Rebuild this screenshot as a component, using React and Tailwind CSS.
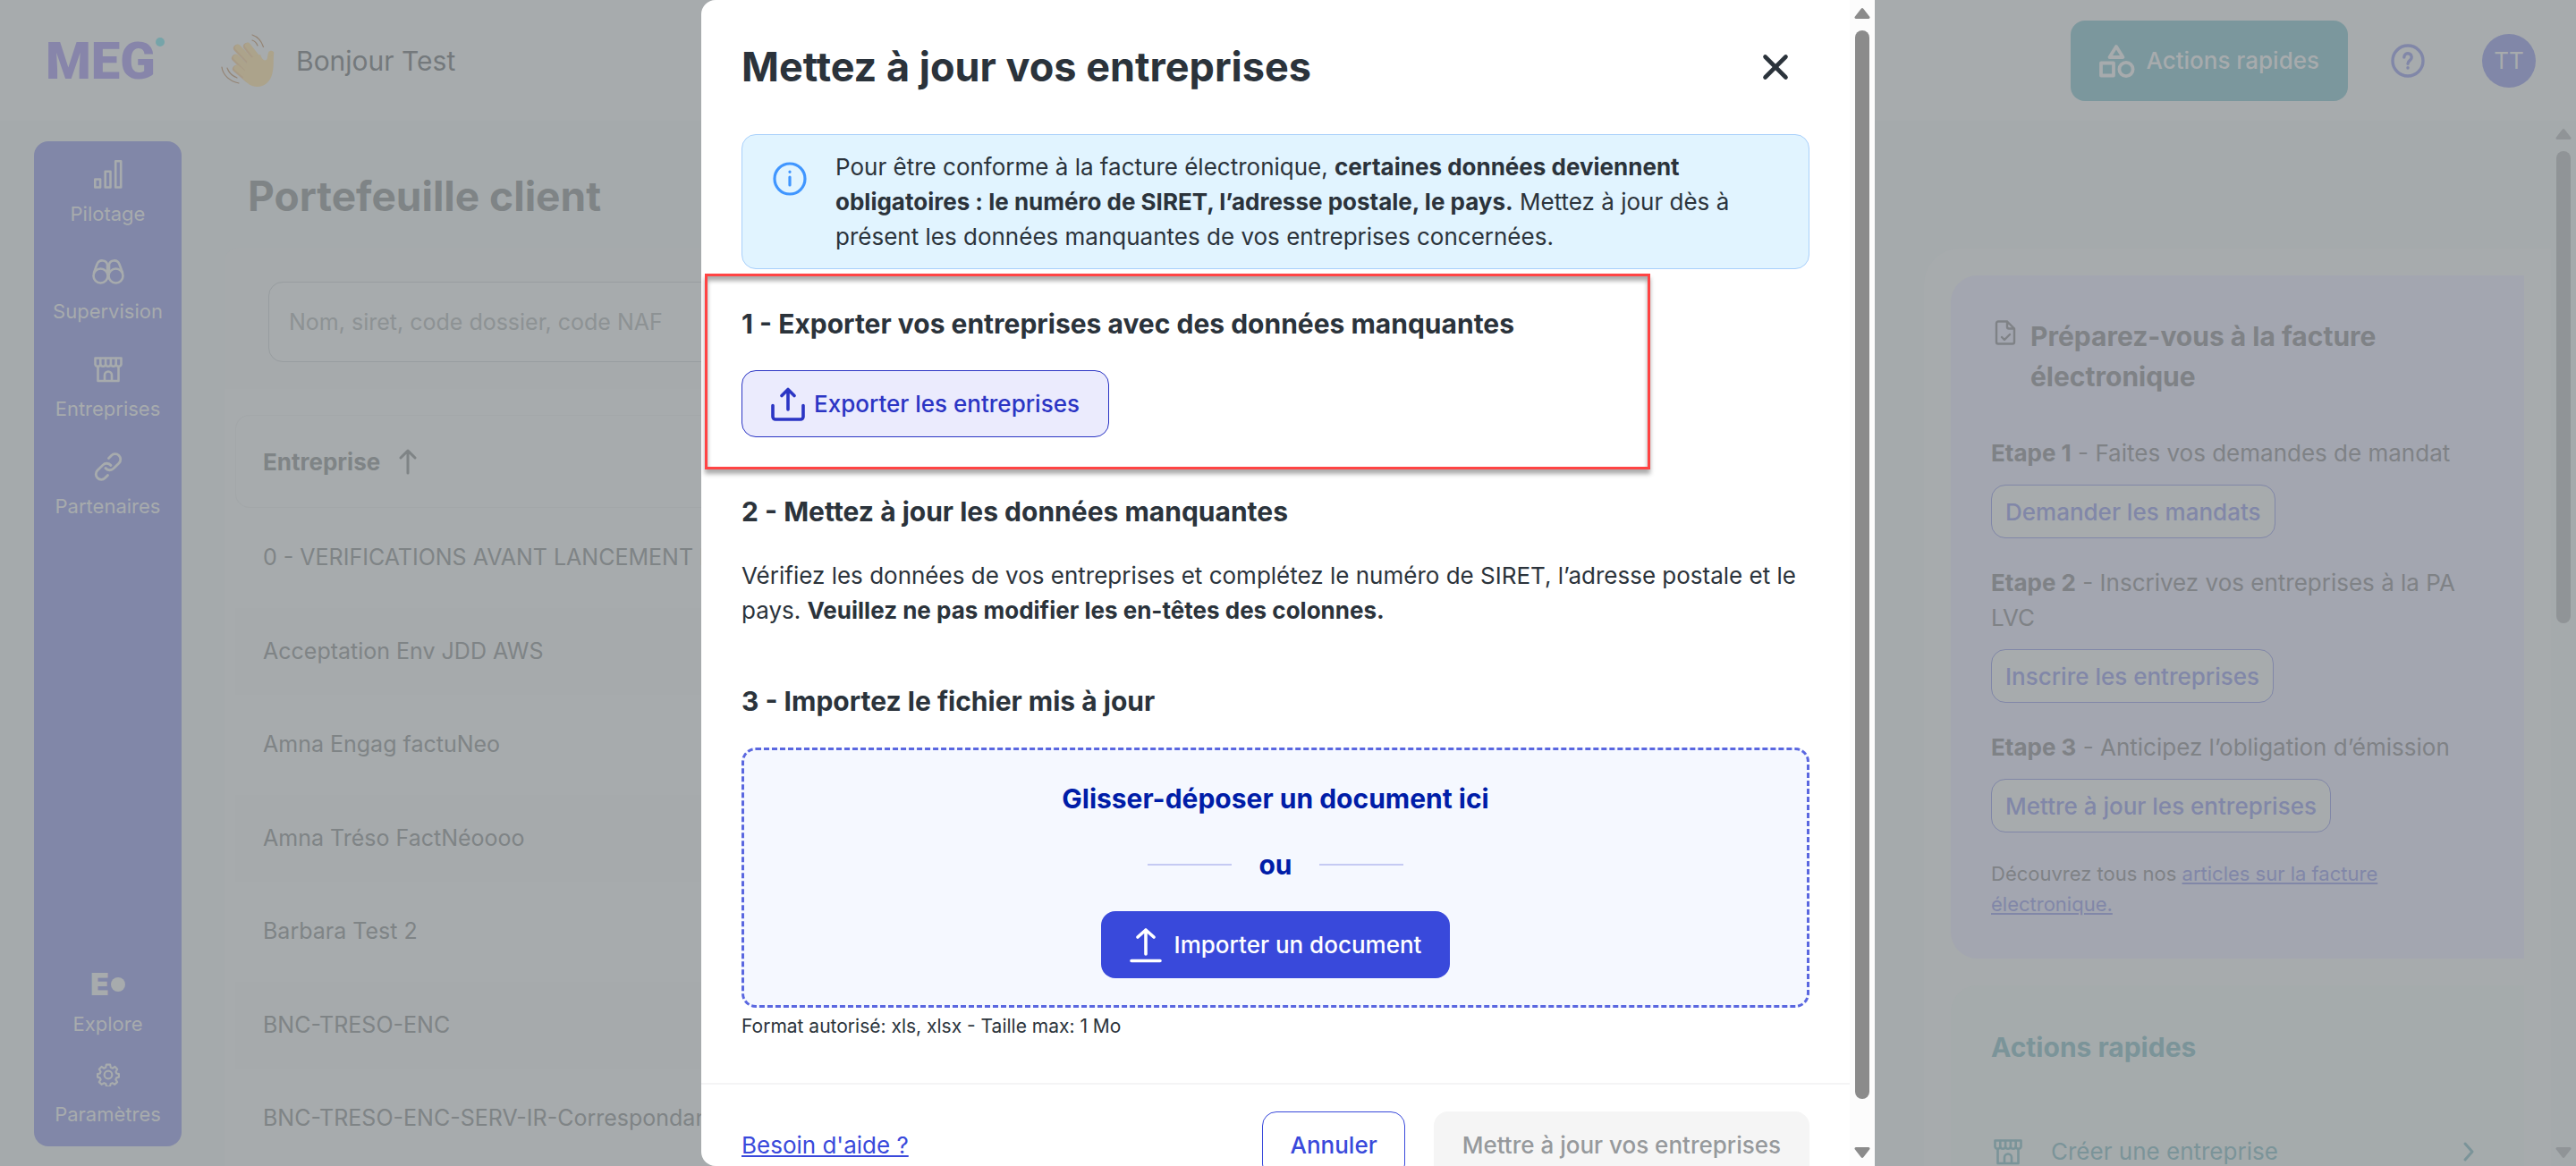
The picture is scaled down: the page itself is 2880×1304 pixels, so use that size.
import { useState } from "react";
import { X } from "lucide-react";

const NAV_TOP = [
  { label: "Pilotage", icon: BarsIcon },
  { label: "Supervision", icon: BinocularsIcon },
  { label: "Entreprises", icon: ShopIcon },
  { label: "Partenaires", icon: ChainIcon },
];

const COMPANIES = [
  "0 - VERIFICATIONS AVANT LANCEMENT DES TESTS",
  "Acceptation Env JDD AWS",
  "Amna Engag factuNeo",
  "Amna Tréso FactNéoooo",
  "Barbara Test 2",
  "BNC-TRESO-ENC",
  "BNC-TRESO-ENC-SERV-IR-Correspondance",
];

const STEPS = [
  { n: 1, text: "Faites vos demandes de mandat", action: "Demander les mandats" },
  { n: 2, text: "Inscrivez vos entreprises à la PA LVC", action: "Inscrire les entreprises" },
  { n: 3, text: "Anticipez l’obligation d’émission", action: "Mettre à jour les entreprises" },
];

function Svg({ children, className, width = 2, viewBox = "0 0 24 24" }) {
  return (
    <svg
      viewBox={viewBox}
      className={className}
      fill="none"
      stroke="currentColor"
      strokeWidth={width}
      strokeLinecap="round"
      strokeLinejoin="round"
      aria-hidden="true"
    >
      {children}
    </svg>
  );
}

function BarsIcon({ className }) {
  return (
    <Svg className={className} viewBox="0 0 32 32" width={2.6}>
      <rect x="1.3" y="21.5" width="5.8" height="9" />
      <rect x="12.7" y="12.8" width="5.8" height="17.7" />
      <rect x="24.2" y="1.3" width="6" height="29.2" />
    </Svg>
  );
}

function BinocularsIcon({ className }) {
  return (
    <Svg className={className} viewBox="0 0 36 32" width={2.6}>
      <circle cx="9.5" cy="20.5" r="8" />
      <circle cx="26.5" cy="20.5" r="8" />
      <path d="M2 17 5.5 7.5C8 1.5 16 2.5 17 8v8M34 17 30.5 7.5C28 1.5 20 2.5 19 8v8M17 9.5h2" />
    </Svg>
  );
}

function ShopIcon({ className }) {
  return (
    <Svg className={className} viewBox="0 0 32 32" width={2.6}>
      <path d="M1.5 3.5h29v7a3 3 0 0 1-5.8 0 3 3 0 0 1-5.8 0 3 3 0 0 1-5.8 0 3 3 0 0 1-5.8 0 3 3 0 0 1-5.8 0z" />
      <path d="M7.3 4v6M13.1 4v6M18.9 4v6M24.7 4v6M4.5 13v16h23V13M12 29v-6.5a4 4 0 0 1 8 0V29" />
    </Svg>
  );
}

function ChainIcon({ className }) {
  return (
    <Svg className={className} viewBox="0 0 32 32" width={2.8}>
      <path d="M13 17.5a6 6 0 0 0 9 .4l6-6a6 6 0 0 0-8.5-8.5l-3 3" />
      <path d="M19 14.5a6 6 0 0 0-9-.4l-6 6a6 6 0 0 0 8.500 8.500l3-3" />
    </Svg>
  );
}

function GearIcon({ className }) {
  return (
    <Svg className={className} width={2}>
      <circle cx="12" cy="12" r="4" />
      <path d="M10 1.5h4l.6 3 1.800.8 2.600-1.700 2.400 2.600-1.500 2.600.7 1.800 2.400.6v3.200l-2.500.7-.8 1.800 1.600 2.600-2.500 2.500-2.500-1.500-1.800.7-.7 2.800H10.200l-.7-2.800-1.800-.7-2.600 1.500-2.500-2.500 1.600-2.600-.8-1.800-2.400-.7v-3.200l2.400-.6.8-1.800-1.600-2.600 2.500-2.600 2.500 1.700 1.800-.8z" />
    </Svg>
  );
}

function ShapesIcon({ className }) {
  return (
    <Svg className={className} viewBox="0 0 40 38" width={3.8}>
      <path d="M19 3 26.5 15h-15z" />
      <rect x="2" y="21.5" width="14" height="14" />
      <circle cx="30" cy="28.5" r="7.6" />
    </Svg>
  );
}

function HelpIcon({ className }) {
  return (
    <Svg className={className} viewBox="0 0 38 38" width={3.4}>
      <circle cx="19" cy="19" r="17" />
      <path d="M14.8 15a4.200 4.200 0 1 1 6.800 3.200c-1.600 1.300-2.600 2-2.600 4M19 26.800v.2" />
    </Svg>
  );
}

function WaveHand({ className }) {
  return (
    <svg viewBox="0 0 62 60" className={className} fill="none" strokeLinecap="round" aria-hidden="true">
      <g stroke="#a89a86" strokeWidth="8">
        <path d="M18 16 36 35M29 14 44 33M16 27 32 43M17 39 30 50" />
      </g>
      <g stroke="#aca38b" strokeWidth="6.500">
        <path d="M19 15 37 34M30 13 45 32M17 26 33 42M18 38 31 49M56 22 53 38" />
      </g>
      <path d="M30 28 44 23C46 29 49 31 52 28l6.500-5c.5 7 .5 14-1 21-2 9-9 15-17 15-7 0-11-4-16-9z" fill="#aca38b" />
      <g stroke="#948474" strokeWidth="1.2">
        <path d="M35 1c6 2 10 6 12.500 13.500M35 7c3 1 5 3.500 6 6M1 37c1 9 9 16 19 18M7 38c2 6 6 9 11 11" />
      </g>
    </svg>
  );
}

function InfoIcon({ className }) {
  return (
    <Svg className={className} viewBox="0 0 38 38" width={3.2}>
      <circle cx="19" cy="19" r="17" />
      <path d="M19 17v9M19 11v.3" />
    </Svg>
  );
}

function ExportIcon({ className }) {
  return (
    <Svg className={className} viewBox="0 0 38 38" width={3.6}>
      <path d="M19 25V2.5M12 9.500l7-7 7 7M2 20.500V33a3 3 0 0 0 3 3h28a3 3 0 0 0 3-3V20.500" />
    </Svg>
  );
}

function UploadIcon({ className }) {
  return (
    <Svg className={className} viewBox="0 0 36 40" width={3.6}>
      <path d="M18 30V3M9 11l9-8 9 8M2 37.500h32" />
    </Svg>
  );
}

function Arrow({ down }) {
  return (
    <svg viewBox="0 0 18 14" className="h-3.5 w-[18px]" fill="currentColor" aria-hidden="true">
      {down ? (
        <path d="M2 1h14a1.500 1.500 0 0 1 1.300 2.300l-7 9a1.700 1.700 0 0 1-2.600 0l-7-9A1.500 1.500 0 0 1 2 1z" />
      ) : (
        <path d="M2 13h14a1.500 1.500 0 0 0 1.300-2.300l-7-9a1.700 1.700 0 0 0-2.600 0l-7 9A1.500 1.500 0 0 0 2 13z" />
      )}
    </svg>
  );
}

function NavItem({ label, children }) {
  return (
    <a href="#" className="flex flex-col items-center">
      <span className="flex h-8 items-center">{children}</span>
      <span className="mt-3 text-[22px] leading-8">{label}</span>
    </a>
  );
}

function Header() {
  return (
    <header className="flex h-[135px] shrink-0 items-center bg-[#a7abad] pr-[45px] pl-[51px]">
      <a href="#" aria-label="MEG" className="flex w-[196px] items-start text-[#8785aa]">
        <span className="font-[Roboto] text-[58px] leading-[60px] font-black">MEG</span>
        <span className="mt-1 h-2.5 w-2.5 rounded-full bg-[#76a4a9]" />
      </a>
      <WaveHand className="h-[60px] w-[62px]" />
      <p className="ml-[22px] text-[30px] leading-10 text-[#74797c]">Bonjour Test</p>
      <button className="ml-auto flex h-[90px] items-center gap-3 rounded-2xl bg-[#7b979d] px-8 text-[26px] font-medium text-[#a7abad]">
        <ShapesIcon className="h-[38px] w-10" />
        Actions rapides
      </button>
      <button aria-label="Aide" className="ml-12 text-[#8187a8]">
        <HelpIcon className="h-[38px] w-[38px]" />
      </button>
      <button className="ml-16 h-[60px] w-[60px] rounded-full bg-[#8187a8] text-[26px] text-[#a7abad]">
        TT
      </button>
    </header>
  );
}

function Sidebar() {
  return (
    <nav className="mt-[23px] mb-[22px] ml-[38px] flex w-[165px] shrink-0 flex-col rounded-2xl bg-[#8187a8] pt-[21px] pb-5 text-[#a7abad]">
      <div className="flex flex-col gap-[33px]">
        {NAV_TOP.map(({ label, icon: Icon }) => (
          <NavItem key={label} label={label}>
            <Icon className="h-8 w-9" />
          </NavItem>
        ))}
      </div>
      <div className="mt-auto flex flex-col gap-[25px]">
        <NavItem label="Explore">
          <span className="flex items-center gap-0.5">
            <span className="text-[34px] leading-8 font-black">E</span>
            <span className="h-4 w-4 rounded-full bg-[#a7abad]" />
          </span>
        </NavItem>
        <NavItem label="Paramètres">
          <GearIcon className="h-[26px] w-[26px]" />
        </NavItem>
      </div>
    </nav>
  );
}

function Portfolio() {
  const [query, setQuery] = useState("");

  return (
    <main className="ml-12 flex min-w-0 flex-1 flex-col pt-[54px]">
      <h1 className="pl-[26px] text-[46px] leading-[60px] font-bold text-[#7f8486]">Portefeuille client</h1>
      <div className="mt-7 rounded-t-2xl bg-[#a6aaac] pt-[38px] pr-12 pb-[30px] pl-[49px]">
        <input
          type="search"
          aria-label="Rechercher une entreprise"
          value={query}
          onChange={(e) => setQuery(e.target.value)}
          placeholder="Nom, siret, code dossier, code NAF"
          className="h-[90px] w-full rounded-2xl border border-[#989da0] bg-[#a7abad] px-[22px] text-[25px] placeholder:text-[#8d9294]"
        />
      </div>
      <div className="flex-1 bg-[#a7abad] pt-[29px] pl-3">
        <table className="w-full table-fixed text-[25px] text-[#7f8486]">
          <thead>
            <tr className="h-[104px]">
              <th className="rounded-2xl pl-[31px] text-left text-[26px] font-bold shadow-[inset_0_0_0_1px_#a3a7a9]">
                <span className="flex items-center gap-5">
                  Entreprise
                  <Svg className="h-[30px] w-[22px]" viewBox="0 0 22 30" width={3}>
                    <path d="M11 28V3M3 11l8-8 8 8" />
                  </Svg>
                </span>
              </th>
            </tr>
          </thead>
          <tbody>
            {COMPANIES.map((name) => (
              <tr key={name} className="h-28 even:h-[97px] even:bg-[#a6aaac]">
                <td className="overflow-hidden pl-[31px] whitespace-nowrap">{name}</td>
              </tr>
            ))}
          </tbody>
        </table>
      </div>
    </main>
  );
}

function SidePanel() {
  return (
    <aside className="mt-[143px] ml-[55px] w-[701px] shrink-0 overflow-hidden rounded-tl-[40px] bg-[#a7abad] pt-[30px] pr-[30px] pl-[30px]">
      <section className="rounded-l-[30px] bg-[#a3a6b0] pt-[46px] pr-10 pb-11 pl-[45px] text-[#7f8286]">
        <h2 className="flex gap-4 text-[30px] leading-[45px] font-bold">
          <Svg className="mt-1 ml-1 h-[28px] w-6 shrink-0" viewBox="0 0 24 28" width={2.4}>
            <path d="M14 1.500H4a2 2 0 0 0-2 2v21a2 2 0 0 0 2 2h16a2 2 0 0 0 2-2V9.500zM14 1.500v6a2 2 0 0 0 2 2h6M8 19l3 3 6-6" />
          </Svg>
          <span className="pr-24">Préparez-vous à la facture électronique</span>
        </h2>
        <ol className="mt-[43px] flex flex-col gap-[30px]">
          {STEPS.map((s) => (
            <li key={s.n}>
              <p className="text-[26px] leading-[39px]">
                <strong>Etape {s.n}</strong> - {s.text}
              </p>
              <button className="mt-4 h-[60px] rounded-2xl border border-[#8187a8] bg-[#a7abad] px-[15px] text-[26px] font-medium text-[#8187a8]">
                {s.action}
              </button>
            </li>
          ))}
        </ol>
        <p className="mt-[29px] text-[22px] leading-[34px]">
          Découvrez tous nos{" "}
          <a href="#" className="text-[#8187a8] underline">
            articles sur la facture électronique.
          </a>
        </p>
      </section>
      <section className="mt-[30px] rounded-tl-[30px] bg-[#a5abac] pt-[49px] pr-[55px] pb-10 pl-[45px] text-[#7b9499]">
        <h2 className="text-[30px] leading-10 font-bold">Actions rapides</h2>
        <a href="#" className="mt-[77px] flex items-center text-[26px] leading-[39px]">
          <ShopIcon className="ml-[3px] h-8 w-8" />
          <span className="ml-8">Créer une entreprise</span>
          <Svg className="ml-auto h-6 w-[14px]" viewBox="0 0 14 24" width={3}>
            <path d="M3 3l8 9-8 9" />
          </Svg>
        </a>
      </section>
    </aside>
  );
}

function UpdateDialog() {
  return (
    <div
      role="dialog"
      aria-modal="true"
      aria-labelledby="dialog-title"
      className="flex w-[1312px] overflow-hidden rounded-l-2xl bg-white text-[#2b333b]"
    >
      <div className="min-w-0 flex-1 overflow-hidden">
        <div className="px-[45px]">
          <div className="flex h-[150px] items-center justify-between">
            <h1 id="dialog-title" className="text-[45px] leading-[60px] font-bold">
              Mettez à jour vos entreprises
            </h1>
            <button aria-label="Fermer" className="mr-[15px]">
              <X className="h-[46px] w-[46px]" strokeWidth={2.4} />
            </button>
          </div>

          <div className="flex gap-8 rounded-2xl border border-[#a9d0fb] bg-[#e1f4ff] px-[34px] py-4">
            <InfoIcon className="mt-3.5 h-[38px] w-[38px] shrink-0 text-[#4096ff]" />
            <p className="text-[26px] leading-[39px]">
              Pour être conforme à la facture électronique, <strong>certaines données deviennent</strong>
              <br />
              <strong>obligatoires : le numéro de SIRET, l’adresse postale, le pays.</strong> Mettez à jour dès à
              <br />
              présent les données manquantes de vos entreprises concernées.
            </p>
          </div>

          <section className="relative mt-[41px]">
            <h2 className="text-[30px] leading-10 font-bold">
              1 - Exporter vos entreprises avec des données manquantes
            </h2>
            <button className="mt-8 flex h-[75px] items-center gap-2.5 rounded-2xl border border-[#2b35c4] bg-[#ebebfd] px-8 text-[26px] font-medium text-[#2b35c4]">
              <ExportIcon className="h-[38px] w-[38px]" />
              Exporter les entreprises
            </button>
            <div className="pointer-events-none absolute -top-9 -bottom-9 -left-[41px] w-[1057px] border-3 border-[#ff4444] shadow-[0_5px_5px_#00000055,inset_0_5px_5px_#00000055]" />
          </section>

          <section className="mt-[63px]">
            <h2 className="text-[30px] leading-10 font-bold">2 - Mettez à jour les données manquantes</h2>
            <p className="mt-8 text-[26px] leading-[39px]">
              Vérifiez les données de vos entreprises et complétez le numéro de SIRET, l’adresse postale et le
              <br />
              pays. <strong>Veuillez ne pas modifier les en-têtes des colonnes.</strong>
            </p>
          </section>

          <section className="mt-[62px]">
            <h2 className="text-[30px] leading-10 font-bold">3 - Importez le fichier mis à jour</h2>
            <div className="mt-8 flex flex-col items-center rounded-2xl border-3 border-dashed border-[#5a67e0] bg-[#f5f8ff] pt-[34px] pb-[30px] text-[30px] leading-10 font-bold text-[#001da8]">
              <p>Glisser-déposer un document ici</p>
              <div className="mt-[34px] flex items-center gap-[30px]">
                <span className="h-0.5 w-[94px] bg-[#c5caf3]" />
                ou
                <span className="h-0.5 w-[94px] bg-[#c5caf3]" />
              </div>
              <button className="mt-8 flex h-[75px] items-center gap-3.5 rounded-2xl bg-[#3949db] px-8 text-[26px] font-medium text-white">
                <UploadIcon className="h-10 w-9" />
                Importer un document
              </button>
            </div>
            <p className="mt-[3px] text-[21px] leading-9">Format autorisé: xls, xlsx - Taille max: 1 Mo</p>
          </section>
        </div>

        <footer className="mt-[45px] flex items-center border-t-2 border-[#f4f4f5] px-[45px] pt-[30px] pb-[30px] text-[26px] font-medium">
          <a href="#" className="font-normal text-[#3949db] underline">
            Besoin d'aide ?
          </a>
          <button className="ml-auto h-[75px] rounded-2xl border border-[#3949db] px-[30px] text-[#3949db]">
            Annuler
          </button>
          <button disabled className="ml-8 h-[75px] rounded-2xl bg-[#f5f5f5] px-8 text-[#96999c]">
            Mettre à jour vos entreprises
          </button>
        </footer>
      </div>

      <div className="flex w-7 shrink-0 flex-col items-center bg-[#fcfcfc] pt-2 pb-2 text-[#8b8b8b]">
        <Arrow />
        <div className="mt-3 mb-[53px] w-4 flex-1 rounded-full bg-[#8b8b8b]" />
        <Arrow down />
      </div>
    </div>
  );
}

export default function App() {
  return (
    <div className="relative flex h-screen flex-col overflow-hidden bg-[#a5aaac] font-[Inter,sans-serif]">
      <Header />
      <div className="flex min-h-0 flex-1 overflow-hidden">
        <Sidebar />
        <Portfolio />
        <SidePanel />
        <div className="flex w-7 shrink-0 flex-col items-center pt-2 pb-2 text-[#909497]">
          <Arrow />
          <div className="mt-3 h-[528px] w-4 rounded-full bg-[#909497]" />
          <div className="mt-auto">
            <Arrow down />
          </div>
        </div>
      </div>
      <div className="absolute inset-0 flex justify-center">
        <UpdateDialog />
      </div>
    </div>
  );
}
